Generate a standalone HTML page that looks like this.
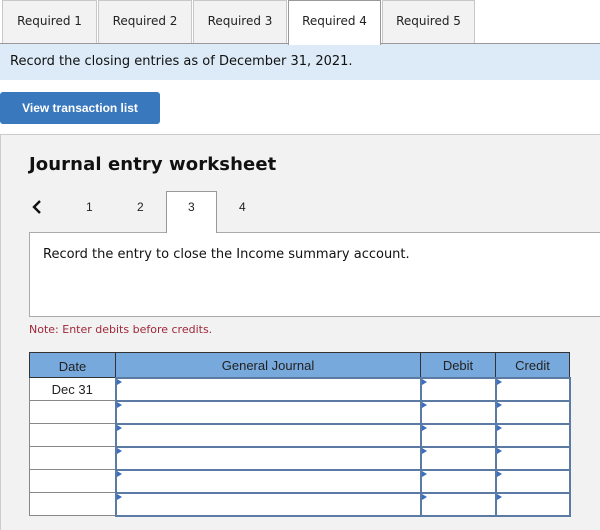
<!DOCTYPE html>
<html><head><style>
*{margin:0;padding:0;box-sizing:border-box}
body{width:600px;height:530px;background:#fff;font-family:Verdana,"DejaVu Sans",sans-serif;position:relative;overflow:hidden}
.tab{position:absolute;top:0;height:44px;background:#f2f2f2;border:1px solid #c8c8c8;border-bottom:none;font-size:12px;line-height:40px;text-align:center;color:#222}
.tab.a{background:#fff;height:45px;border-color:#999;z-index:2}
.line{position:absolute;top:43px;left:0;width:600px;height:1px;background:#999}
.band{position:absolute;top:44px;left:0;width:600px;height:36px;background:#dcebf7;font-size:13px;line-height:36px;padding-left:10px;color:#111}
.btn{position:absolute;left:0;top:92px;width:160px;height:32px;background:#3a78bd;border-radius:3px;color:#fff;font:bold 12px "Liberation Sans",Arial,sans-serif;line-height:32px;text-align:center}
.panel{position:absolute;left:0;top:134px;width:600px;height:396px;background:#f2f2f2;border-top:1px solid #ccc;border-left:1px solid #ccc}
h1{position:absolute;left:29px;top:154px;font-size:18px;font-weight:bold;color:#111;letter-spacing:0.1px}
.n{position:absolute;top:200px;font:12px "Liberation Sans",Arial,sans-serif;color:#222}
.ntab{position:absolute;left:166px;top:191px;width:51px;height:42px;background:#fff;border:1px solid #999;border-bottom:none;z-index:2}
.box{position:absolute;left:29px;top:232px;width:572px;height:85px;background:#fff;border:1px solid #aaa}
.box p{position:absolute;left:13px;top:14px;font-size:13px;color:#111}
.note{position:absolute;left:29px;top:323px;font-size:11px;color:#a0283a}
table{position:absolute;left:29px;top:352px;border-collapse:collapse;font:13px "Liberation Sans",Arial,sans-serif}
th{background:#78a9dc;height:25px;border:1px solid #333;font-weight:normal;color:#222;padding-top:2px}
td{height:23px;border:1px solid #888;background:#fff;text-align:center;color:#222;position:relative}
td.i{border:2px solid #5b7ba5}
td.i:before{content:"";position:absolute;left:0;top:0;border-left:5px solid #3a6fbf;border-top:3px solid transparent;border-bottom:3px solid transparent}
</style></head><body>
<div class="tab" style="left:2px;width:95px">Required 1</div>
<div class="tab" style="left:98px;width:94px">Required 2</div>
<div class="tab" style="left:193px;width:94px">Required 3</div>
<div class="tab a" style="left:288px;width:93px">Required 4</div>
<div class="tab" style="left:382px;width:93px">Required 5</div>
<div class="line"></div>
<div class="band">Record the closing entries as of December 31, 2021.</div>
<div class="btn">View transaction list</div>
<div class="panel"></div>
<h1>Journal entry worksheet</h1>
<svg style="position:absolute;left:31px;top:199px" width="12" height="16" viewBox="0 0 12 16"><path d="M9 2 L3 8 L9 14" fill="none" stroke="#111" stroke-width="2.4"/></svg>
<div class="ntab"></div>
<div class="n" style="left:86px">1</div>
<div class="n" style="left:137px">2</div>
<div class="n" style="left:188px;z-index:3">3</div>
<div class="n" style="left:239px">4</div>
<div class="box"><p>Record the entry to close the Income summary account.</p></div>
<div class="note">Note: Enter debits before credits.</div>
<table>
<tr><th style="width:86px">Date</th><th style="width:305px">General Journal</th><th style="width:75px">Debit</th><th style="width:74px">Credit</th></tr>
<tr><td>Dec 31</td><td class="i"></td><td class="i"></td><td class="i"></td></tr>
<tr><td></td><td class="i"></td><td class="i"></td><td class="i"></td></tr>
<tr><td></td><td class="i"></td><td class="i"></td><td class="i"></td></tr>
<tr><td></td><td class="i"></td><td class="i"></td><td class="i"></td></tr>
<tr><td></td><td class="i"></td><td class="i"></td><td class="i"></td></tr>
<tr><td></td><td class="i"></td><td class="i"></td><td class="i"></td></tr>
</table>
</body></html>
